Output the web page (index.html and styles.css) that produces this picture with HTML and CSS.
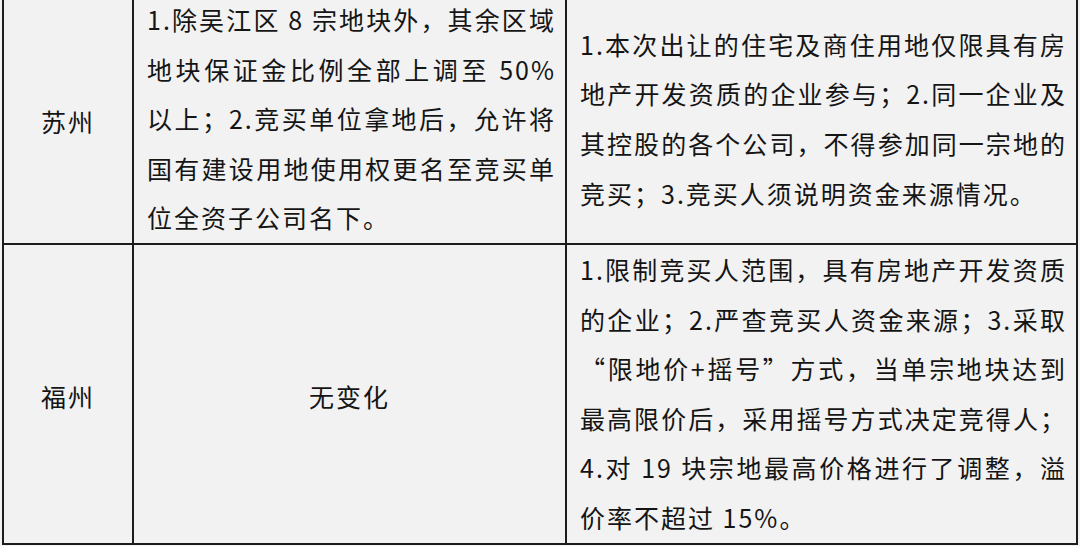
FILE: index.html
```html
<!DOCTYPE html>
<html lang="zh-CN">
<head>
<meta charset="utf-8">
<title>土地出让政策对比</title>
<link rel="stylesheet" href="styles.css">
</head>
<body>
<div class="policy-table">
  <div class="cell city">苏州</div>
  <div class="cell text">
    <span class="ln">1.除吴江区 8 宗地块外，其余区域</span>
    <span class="ln">地块保证金比例全部上调至 50%</span>
    <span class="ln">以上；2.竞买单位拿地后，允许将</span>
    <span class="ln">国有建设用地使用权更名至竞买单</span>
    <span class="ln end">位全资子公司名下。</span>
  </div>
  <div class="cell text">
    <span class="ln">1.本次出让的住宅及商住用地仅限具有房</span>
    <span class="ln">地产开发资质的企业参与；2.同一企业及</span>
    <span class="ln">其控股的各个公司，不得参加同一宗地的</span>
    <span class="ln end">竞买；3.竞买人须说明资金来源情况。</span>
  </div>

  <div class="cell city">福州</div>
  <div class="cell city">无变化</div>
  <div class="cell text">
    <span class="ln">1.限制竞买人范围，具有房地产开发资质</span>
    <span class="ln">的企业；2.严查竞买人资金来源；3.采取</span>
    <span class="ln">“限地价+摇号”方式，当单宗地块达到</span>
    <span class="ln">最高限价后，采用摇号方式决定竞得人；</span>
    <span class="ln">4.对 19 块宗地最高价格进行了调整，溢</span>
    <span class="ln end">价率不超过 15%。</span>
  </div>
</div>
</body>
</html>
```

FILE: styles.css
```css
html, body {
  margin: 0;
  padding: 0;
  background: #f2f2f2;
}

body {
  font-family: "Noto Sans CJK SC", "Noto Sans", sans-serif;
  color: #151515;
  overflow: hidden;
}

.policy-table {
  display: grid;
  grid-template-columns: 130px 433px 511px;
  margin: -5px 0 0 2px;
  width: 1076px;
  border-left: 2px solid #1c1c1c;
}

.cell {
  box-sizing: border-box;
  border-right: 2px solid #1c1c1c;
  border-bottom: 2px solid #1c1c1c;
  font-size: 25px;
  line-height: 49.6px;
  letter-spacing: 2px;
  display: flex;
  flex-direction: column;
  justify-content: center;
}

.city {
  align-items: center;
  text-align: center;
  padding-top: 6px;
}

.text {
  padding: 0 9px 0 13px;
}

.ln {
  display: block;
  white-space: nowrap;
  text-align: justify;
  text-align-last: justify;
}

.ln.end {
  text-align: left;
  text-align-last: left;
}
```
